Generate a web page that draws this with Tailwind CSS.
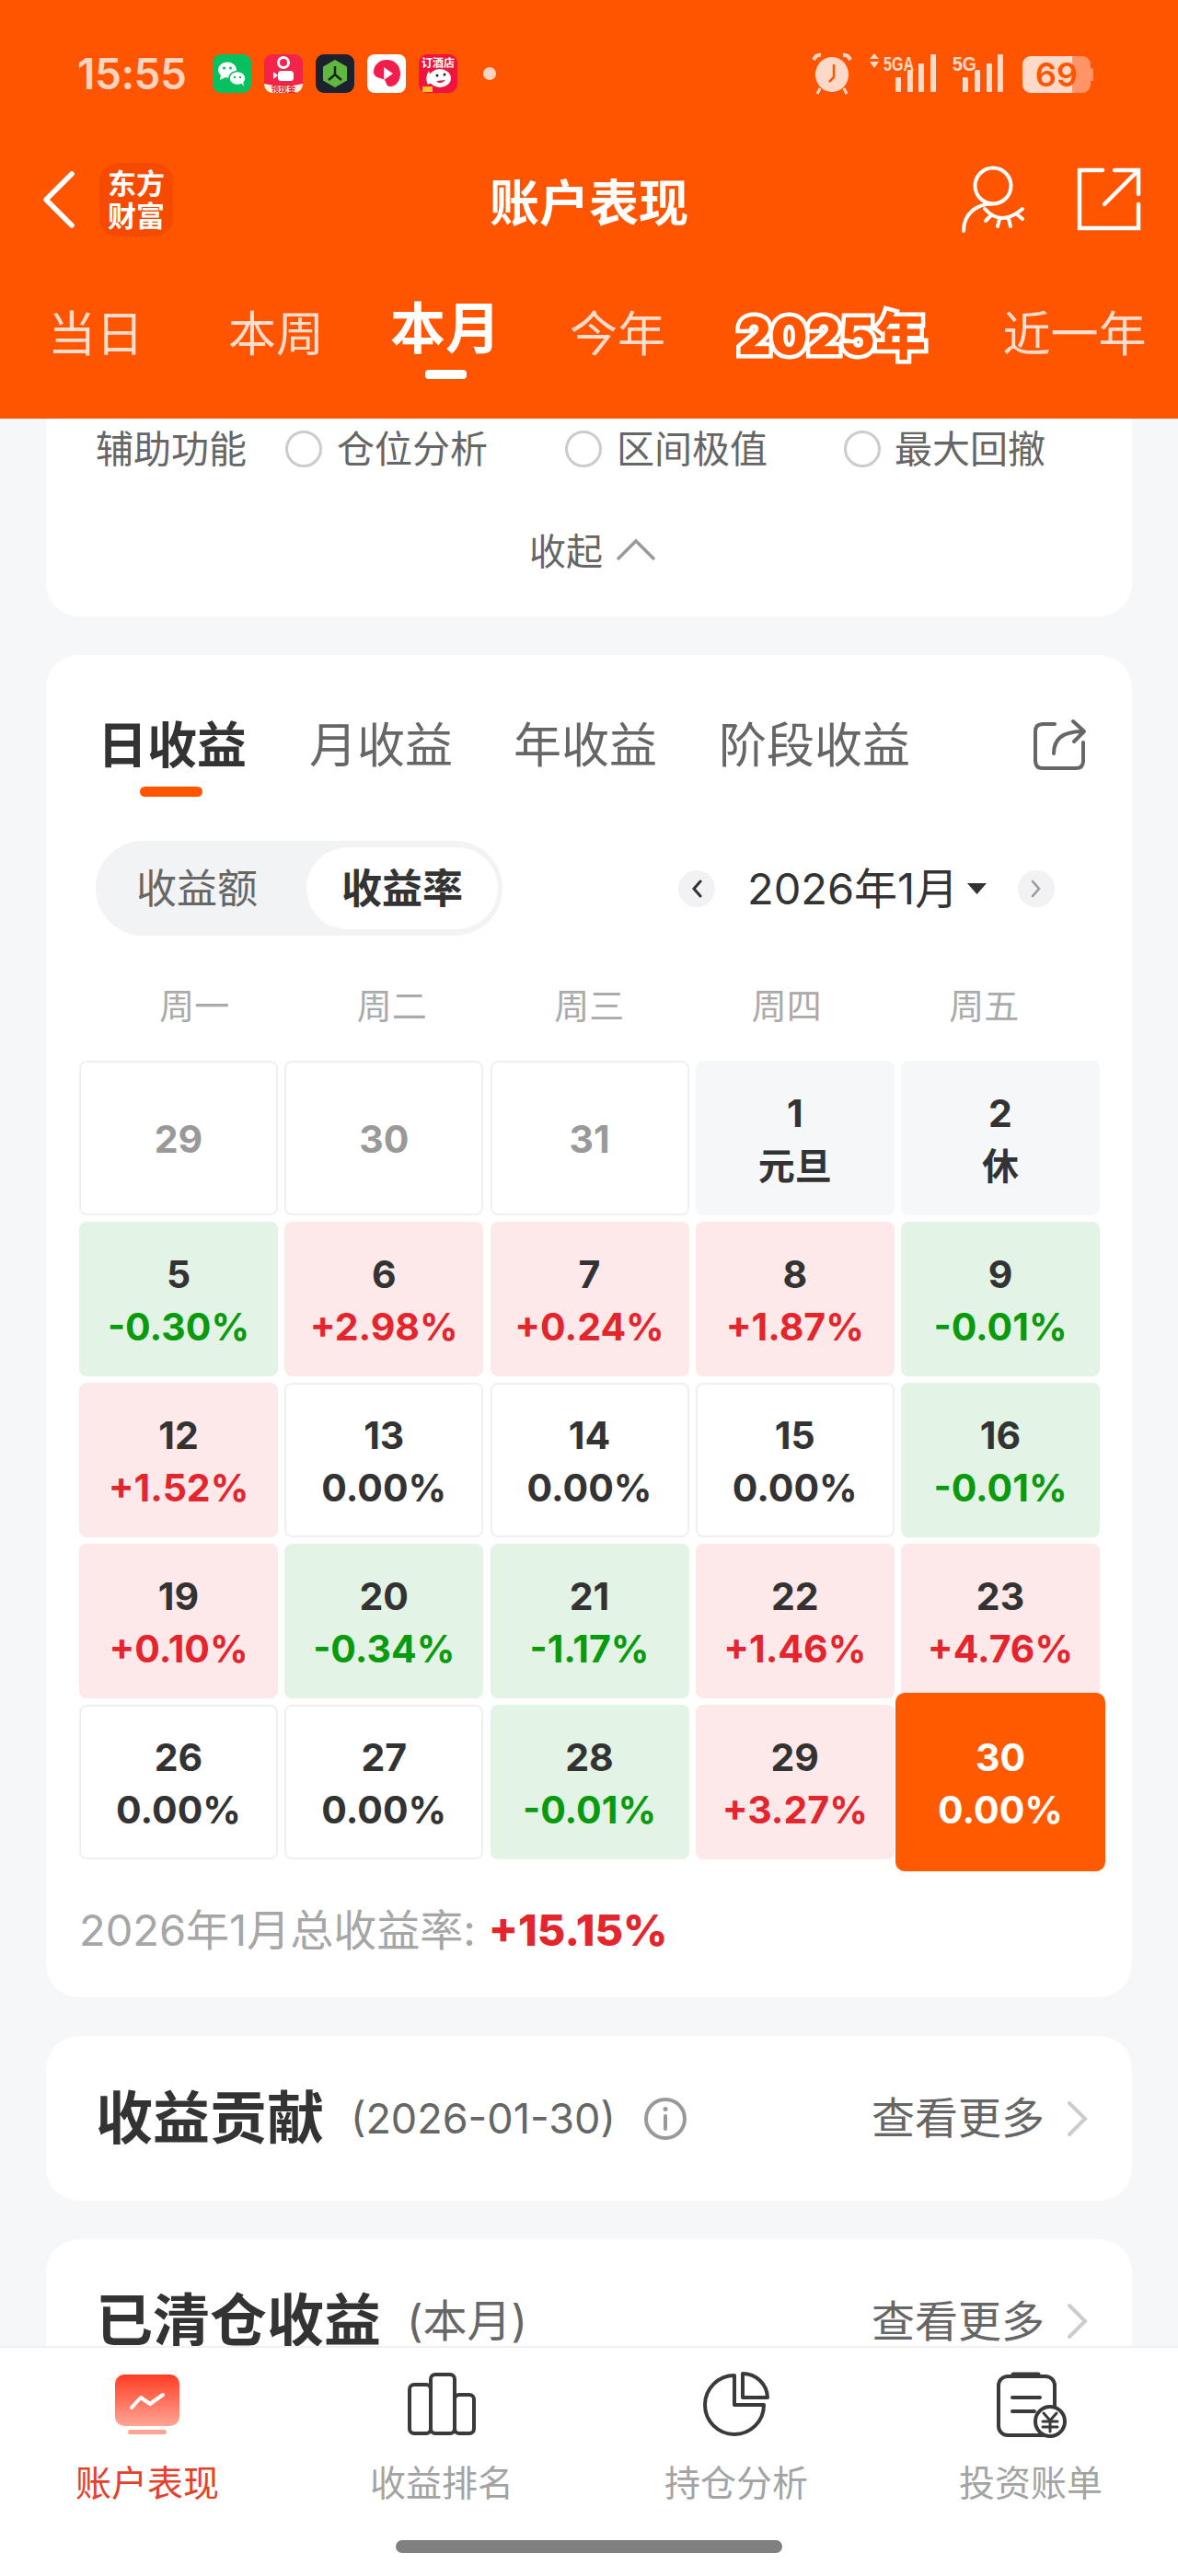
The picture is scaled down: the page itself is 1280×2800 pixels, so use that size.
<!DOCTYPE html>
<html lang="zh-CN">
<head>
<meta charset="utf-8">
<title>账户表现</title>
<script src="https://cdn.jsdelivr.net/npm/@tailwindcss/browser@4"></script>
</head>
<body class="[font-family:Inter,'Noto_Sans_CJK_SC',sans-serif]">
<div class="w-[1280px] h-[2800px] flex flex-col overflow-hidden bg-[#f6f7f9] text-[#333]">

  <header class="h-[455px] shrink-0 bg-[#ff5500] text-white flex flex-col">
    <div class="mt-[59px] h-[42px] flex items-center">
      <span class="ml-[84px] w-[117px] text-[46px] leading-[42px] font-semibold text-[#ffd4bf] tracking-[-0.5px]">15:55</span>
      <div class="ml-[30px] flex gap-[14px] items-center">
        <svg class="w-[42px] h-[42px]" viewBox="0 0 42 42"><rect width="42" height="42" rx="9" fill="#07c160"/><ellipse cx="16" cy="17" rx="10" ry="8.5" fill="#fff"/><path d="M9 22l-1 6 6-3z" fill="#fff"/><ellipse cx="27" cy="26" rx="9" ry="7.5" fill="#fff" stroke="#07c160" stroke-width="1.5"/><path d="M31 31l3 4-1-6z" fill="#fff"/><circle cx="12.5" cy="15" r="1.5" fill="#07c160"/><circle cx="19.500" cy="15" r="1.500" fill="#07c160"/><circle cx="24" cy="25" r="1.200" fill="#07c160"/><circle cx="30" cy="25" r="1.200" fill="#07c160"/></svg>
        <svg class="w-[42px] h-[42px]" viewBox="0 0 42 42"><rect width="42" height="42" rx="9" fill="#f5224a"/><path d="M0 32q21 5 42 0v1a9 9 0 0 1-9 9H9a9 9 0 0 1-9-9z" fill="#fff3d8"/><circle cx="21" cy="9" r="5.500" fill="none" stroke="#fff" stroke-width="3"/><rect x="15" y="18" width="17" height="11" rx="3.500" fill="#fff"/><path d="M10 19l5 4-5 4z" fill="#fff"/><text x="21" y="41" text-anchor="middle" font-size="9" font-weight="700" fill="#e8173f" font-family="Noto Sans CJK SC">领现金</text></svg>
        <svg class="w-[42px] h-[42px]" viewBox="0 0 42 42"><rect width="42" height="42" rx="9" fill="#1c2130"/><path d="M21 6l13 7.500v15L21 36 8 28.500v-15z" fill="#62b83e"/><path d="M21 13v9l-7 6M21 22l7 6" fill="none" stroke="#14261a" stroke-width="2.500"/></svg>
        <svg class="w-[42px] h-[42px]" viewBox="0 0 42 42"><rect width="42" height="42" rx="8" fill="#fff"/><path d="M21 6c9 0 15 6 15 15 0 8-5 14-11 14-3 0-4-2-5-5s-3-3-6-4c-4-1-7-3-7-7 0-7 6-13 14-13z" fill="#f01d4d"/><path d="M18 14l10 7-10 7z" fill="#fff"/></svg>
        <svg class="w-[42px] h-[42px]" viewBox="0 0 42 42"><rect width="42" height="42" rx="9" fill="#f0143c"/><text x="21" y="14" text-anchor="middle" font-size="12" font-weight="700" fill="#fff" font-family="Noto Sans CJK SC">订酒店</text><ellipse cx="23" cy="26" rx="12" ry="10" fill="#fff"/><path d="M11 18q-5 8-1 15l5-3z" fill="#fff"/><path d="M19 29q5 5 10-1z" fill="#d2203e"/><circle cx="20" cy="23" r="1.500" fill="#222"/><circle cx="28" cy="22" r="1.500" fill="#222"/><rect x="4" y="35" width="11" height="6" fill="#ffc02e"/></svg>
      </div>
      <span class="ml-[28px] w-[14px] h-[14px] rounded-full bg-[#ffd4bf]"></span>
      <svg class="ml-[342px] w-[310px] h-[48px]" viewBox="0 0 310 48" fill="#ffd9c7">
        <g fill="none" stroke="#ffd9c7" stroke-width="3">
          <path d="M3 9q3-6 8-5" stroke-width="4"/><path d="M35 4q5-1 8 5" stroke-width="4"/>
        </g>
        <ellipse cx="23" cy="25" rx="18" ry="19"/>
        <path d="M10 40l-3 6M36 40l3 6" stroke="#ffd9c7" stroke-width="3"/>
        <path d="M25 14v14l-5 5" fill="none" stroke="#ff5500" stroke-width="2.500"/>
        <path d="M64 8l5-6 5 6zM64 11h10l-5 7z"/>
        <text x="79" y="21" font-size="22" font-weight="700" textLength="33" lengthAdjust="spacingAndGlyphs" font-family="Liberation Sans">5GA</text>
        <rect x="92" y="28" width="6" height="16" rx="1"/><rect x="105" y="20" width="6" height="24" rx="1"/><rect x="117" y="13" width="6" height="31" rx="1"/><rect x="130" y="3" width="6" height="41" rx="1"/>
        <text x="154" y="21" font-size="22" font-weight="700" textLength="26" lengthAdjust="spacingAndGlyphs" font-family="Liberation Sans">5G</text>
        <rect x="165" y="28" width="6" height="16" rx="1"/><rect x="178" y="20" width="6" height="24" rx="1"/><rect x="191" y="13" width="6" height="31" rx="1"/><rect x="203" y="3" width="6" height="41" rx="1"/>
        <rect x="230" y="5" width="74" height="40" rx="9" fill="#ff9566"/>
        <path d="M239 5h45v40h-45a9 9 0 0 1-9-9V14a9 9 0 0 1 9-9z"/>
        <rect x="304" y="18" width="3" height="14" rx="1.500" fill="#ff9566"/>
        <text x="267" y="38" text-anchor="middle" font-size="36" font-weight="600" fill="#ff5500" font-family="Inter">69</text>
      </svg>
    </div>

    <div class="mt-[76px] h-[80px] relative flex items-center">
      <svg class="ml-[44px] w-[40px] h-[66px]" viewBox="0 0 40 66" fill="none" stroke="#fff" stroke-width="5.500" stroke-linecap="round" stroke-linejoin="round"><path d="M34 5L6 33l28 28"/></svg>
      <div class="ml-[24px] w-[80px] h-[80px] rounded-[20px] bg-[#f54a00] flex flex-col items-center justify-center text-[31px] leading-[35px] font-bold"><span>东方</span><span>财富</span></div>
      <h1 class="absolute left-0 right-0 top-[5px] text-center text-[54px] leading-[80px] font-bold">账户表现</h1>
      <svg class="ml-auto w-[80px] h-[80px]" viewBox="0 0 80 80" fill="none" stroke="#fff" stroke-width="4" stroke-linecap="round"><circle cx="39" cy="25" r="19.500"/><path d="M38 44.500C20 45 7 56 7 74"/><path d="M30 50q18 20 41 0M37 57l-6 6M46 61l-2 8M56 61l2 8M65 56l6 5"/></svg>
      <svg class="ml-[49px] mr-[39px] w-[72px] h-[72px]" viewBox="0 0 72 72" fill="none" stroke="#fff" stroke-width="4.500" stroke-linecap="round"><path d="M29 4H4v63h64V41M42 4h26v26M31 41L68 4"/></svg>
    </div>

    <nav class="mt-[67px] flex items-center h-[80px] text-[52px] leading-[60px] text-[#ffdccb]">
      <span class="ml-[52px]">当日</span>
      <span class="ml-[92px]">本周</span>
      <div class="ml-[72px] self-start flex flex-col items-center text-white">
        <span class="text-[60px] leading-[66px] font-bold">本月</span>
        <span class="block w-[45px] h-[10px] rounded-[4px] bg-white mt-[12px]"></span>
      </div>
      <span class="ml-[75px]">今年</span>
      <span class="ml-[79px] text-[55px] font-black text-[#ff5500] [-webkit-text-stroke:9px_#fff] [paint-order:stroke_fill] mb-[-1px] tracking-[0.5px]">2025年</span>
      <span class="ml-[83px]">近一年</span>
    </nav>
  </header>

  <main class="flex-1 min-h-0 overflow-hidden flex flex-col px-[50px]">
    <section class="shrink-0 h-[215px] rounded-b-[36px] bg-white">
      <div class="pt-[8px] pl-[54px] flex items-center text-[41px] leading-[50px] text-[#666]">
        <span>辅助功能</span>
        <span class="ml-[42px] w-[40px] h-[40px] rounded-full border-[3px] border-[#ccc]"></span>
        <span class="ml-[16px]">仓位分析</span>
        <span class="ml-[84px] w-[40px] h-[40px] rounded-full border-[3px] border-[#ccc]"></span>
        <span class="ml-[16px]">区间极值</span>
        <span class="ml-[83px] w-[40px] h-[40px] rounded-full border-[3px] border-[#ccc]"></span>
        <span class="ml-[15px]">最大回撤</span>
      </div>
      <div class="mt-[62px] pl-[525px] flex items-center text-[40px] leading-[50px] text-[#666]">
        <span>收起</span>
        <svg class="ml-[15px] w-[42px] h-[24px] mb-[6px]" viewBox="0 0 42 24" fill="none" stroke="#999" stroke-width="3.500" stroke-linecap="round"><path d="M2 22L21 3l19 19"/></svg>
      </div>
    </section>

    <section class="shrink-0 mt-[42px] h-[1459px] rounded-[36px] bg-white pl-[36px] pt-[69px]">
      <div class="h-[60px] pl-[20px] flex items-center text-[52px] leading-[60px] text-[#666]">
        <span class="text-[54px] font-bold text-[#333]">日收益</span>
        <span class="ml-[68px]">月收益</span>
        <span class="ml-[66px]">年收益</span>
        <span class="ml-[67px]">阶段收益</span>
        <svg class="ml-[133px] w-[60px] h-[60px]" viewBox="0 0 60 60" fill="none" stroke="#666" stroke-width="4" stroke-linecap="round" stroke-linejoin="round"><path d="M24 6H11Q3 6 3 14v32q0 8 8 8h36q8 0 8-8V26M23 38c0-16 10-24 31-24M44 3l12 11-11 11"/></svg>
      </div>
      <div class="ml-[66px] mt-[14px] w-[68px] h-[11px] rounded-full bg-[#ff5500]"></div>

      <div class="mt-[48px] h-[103px] flex items-center">
        <div class="ml-[18px] w-[442px] h-[103px] rounded-full bg-[#f2f3f5] flex items-center text-[44px]">
          <span class="ml-[44px] text-[#666]">收益额</span>
          <span class="ml-[53px] w-[208px] h-[89px] rounded-full bg-white flex items-center justify-center font-bold text-[#333]">收益率</span>
        </div>
        <span class="ml-[191px] w-[40px] h-[40px] rounded-full bg-[#f2f2f4] flex items-center justify-center">
          <svg class="w-[12px] h-[20px]" viewBox="0 0 12 20" fill="none" stroke="#333" stroke-width="3" stroke-linecap="round"><path d="M10 2L3 10l7 8"/></svg>
        </span>
        <span class="ml-[35px] text-[47px] leading-[60px] text-[#333] whitespace-nowrap">2026年1月</span>
        <svg class="ml-[10px] w-[21px] h-[12px]" viewBox="0 0 21 12" fill="#333"><path d="M0 0h21L10.500 12z"/></svg>
        <span class="ml-[34px] w-[40px] h-[40px] rounded-full bg-[#f2f2f4] flex items-center justify-center">
          <svg class="w-[12px] h-[20px]" viewBox="0 0 12 20" fill="none" stroke="#999" stroke-width="2.500" stroke-linecap="round"><path d="M2 2l7 8-7 8"/></svg>
        </span>
      </div>

      <div class="mt-[51px] ml-[18px] h-[50px] flex text-[38px] leading-[50px] text-[#aaa] text-center">
        <span class="w-[214.500px]">周一</span><span class="w-[214.500px]">周二</span><span class="w-[214.500px]">周三</span><span class="w-[214.500px]">周四</span><span class="w-[214.500px]">周五</span>
      </div>

      <div class="mt-[35px] grid grid-cols-[repeat(5,216px)] auto-rows-[168px] gap-x-[7.25px] gap-y-[7px] text-center text-[41px] leading-[57px] font-bold [&>div]:pt-[3px]">
        <div class="rounded-[8px] border-2 border-[#f0f0f0] bg-white flex items-center justify-center text-[#999]">29</div>
        <div class="rounded-[8px] border-2 border-[#f0f0f0] bg-white flex items-center justify-center text-[#999]">30</div>
        <div class="rounded-[8px] border-2 border-[#f0f0f0] bg-white flex items-center justify-center text-[#999]">31</div>
        <div class="rounded-[8px] bg-[#f6f7f9] flex flex-col justify-center"><span>1</span><span class="text-[40px] font-bold">元旦</span></div>
        <div class="rounded-[8px] bg-[#f6f7f9] flex flex-col justify-center"><span>2</span><span class="text-[40px] font-bold">休</span></div>

        <div class="rounded-[8px] bg-[#e3f3e5] flex flex-col justify-center"><span>5</span><span class="text-[41px] text-[#0a9a0e]">-0.30%</span></div>
        <div class="rounded-[8px] bg-[#fde9e9] flex flex-col justify-center"><span>6</span><span class="text-[41px] text-[#e3262e]">+2.98%</span></div>
        <div class="rounded-[8px] bg-[#fde9e9] flex flex-col justify-center"><span>7</span><span class="text-[41px] text-[#e3262e]">+0.24%</span></div>
        <div class="rounded-[8px] bg-[#fde9e9] flex flex-col justify-center"><span>8</span><span class="text-[41px] text-[#e3262e]">+1.87%</span></div>
        <div class="rounded-[8px] bg-[#e3f3e5] flex flex-col justify-center"><span>9</span><span class="text-[41px] text-[#0a9a0e]">-0.01%</span></div>

        <div class="rounded-[8px] bg-[#fde9e9] flex flex-col justify-center"><span>12</span><span class="text-[41px] text-[#e3262e]">+1.52%</span></div>
        <div class="rounded-[8px] border-2 border-[#f0f0f0] bg-white flex flex-col justify-center"><span>13</span><span class="text-[41px]">0.00%</span></div>
        <div class="rounded-[8px] border-2 border-[#f0f0f0] bg-white flex flex-col justify-center"><span>14</span><span class="text-[41px]">0.00%</span></div>
        <div class="rounded-[8px] border-2 border-[#f0f0f0] bg-white flex flex-col justify-center"><span>15</span><span class="text-[41px]">0.00%</span></div>
        <div class="rounded-[8px] bg-[#e3f3e5] flex flex-col justify-center"><span>16</span><span class="text-[41px] text-[#0a9a0e]">-0.01%</span></div>

        <div class="rounded-[8px] bg-[#fde9e9] flex flex-col justify-center"><span>19</span><span class="text-[41px] text-[#e3262e]">+0.10%</span></div>
        <div class="rounded-[8px] bg-[#e3f3e5] flex flex-col justify-center"><span>20</span><span class="text-[41px] text-[#0a9a0e]">-0.34%</span></div>
        <div class="rounded-[8px] bg-[#e3f3e5] flex flex-col justify-center"><span>21</span><span class="text-[41px] text-[#0a9a0e]">-1.17%</span></div>
        <div class="rounded-[8px] bg-[#fde9e9] flex flex-col justify-center"><span>22</span><span class="text-[41px] text-[#e3262e]">+1.46%</span></div>
        <div class="rounded-[8px] bg-[#fde9e9] flex flex-col justify-center"><span>23</span><span class="text-[41px] text-[#e3262e]">+4.76%</span></div>

        <div class="rounded-[8px] border-2 border-[#f0f0f0] bg-white flex flex-col justify-center"><span>26</span><span class="text-[41px]">0.00%</span></div>
        <div class="rounded-[8px] border-2 border-[#f0f0f0] bg-white flex flex-col justify-center"><span>27</span><span class="text-[41px]">0.00%</span></div>
        <div class="rounded-[8px] bg-[#e3f3e5] flex flex-col justify-center"><span>28</span><span class="text-[41px] text-[#0a9a0e]">-0.01%</span></div>
        <div class="rounded-[8px] bg-[#fde9e9] flex flex-col justify-center"><span>29</span><span class="text-[41px] text-[#e3262e]">+3.27%</span></div>
        <div class="relative flex flex-col justify-center text-white">
          <div class="absolute left-[-6px] right-[-6px] top-[-13px] bottom-[-13px] rounded-[10px] bg-[#ff5a00]"></div>
          <span class="relative">30</span><span class="relative text-[41px]">0.00%</span>
        </div>
      </div>

      <div class="mt-[47px] h-[60px] flex items-center text-[47px] leading-[60px]">
        <span class="text-[#a6a6a6] whitespace-nowrap">2026年1月总收益率:</span>
        <span class="ml-[14px] font-extrabold text-[#e3262e]">+15.15%</span>
      </div>
    </section>

    <section class="shrink-0 mt-[42px] h-[179px] rounded-[36px] bg-white pl-[54px] pr-[47px] flex items-center">
      <h2 class="text-[62px] leading-[80px] font-bold">收益贡献</h2>
      <span class="ml-[29px] text-[45px] text-[#666]">(2026-01-30)</span>
      <svg class="ml-[30px] w-[48px] h-[48px]" viewBox="0 0 48 48" fill="none" stroke="#999" stroke-width="4" stroke-linecap="round"><circle cx="24" cy="24" r="21"/><path d="M24 21v14"/><circle cx="24" cy="13.500" r="1" fill="#999" stroke-width="3"/></svg>
      <span class="ml-auto text-[47px] text-[#666]">查看更多</span>
      <svg class="ml-[24px] w-[24px] h-[40px]" viewBox="0 0 24 40" fill="none" stroke="#ccc" stroke-width="4" stroke-linecap="round"><path d="M3 3l17 17L3 37"/></svg>
    </section>

    <section class="shrink-0 mt-[42px] h-[179px] rounded-[36px] bg-white pl-[54px] pr-[47px] pt-[49px] flex items-start">
      <h2 class="text-[62px] leading-[80px] font-bold">已清仓收益</h2>
      <span class="ml-[28px] text-[48px] leading-[80px] text-[#666]">(本月)</span>
      <span class="ml-auto text-[47px] leading-[80px] text-[#666]">查看更多</span>
      <svg class="ml-[24px] mt-[20px] w-[24px] h-[40px]" viewBox="0 0 24 40" fill="none" stroke="#ccc" stroke-width="4" stroke-linecap="round"><path d="M3 3l17 17L3 37"/></svg>
    </section>
  </main>

  <footer class="shrink-0 h-[250px] bg-white border-t-2 border-[#f0f0f0] flex flex-col items-center">
    <div class="w-full grid grid-cols-4 pt-[26px] text-center text-[39px] leading-[50px] text-[#a3a3a3]">
      <div class="flex flex-col items-center text-[#e5402a]">
        <svg class="w-[90px] h-[72px]" viewBox="0 0 90 72"><defs><linearGradient id="a" x1="0" y1="0" x2="0" y2="1"><stop offset="0" stop-color="#ff3d22"/><stop offset="1" stop-color="#ffa596"/></linearGradient></defs><rect x="10" y="3" width="70" height="56" rx="10" fill="url(#a)"/><rect x="24" y="63" width="42" height="5" rx="2.500" fill="#ffa596"/><path d="M28 39l10-11 10 7 14-10" fill="none" stroke="#fff" stroke-width="4" stroke-linecap="round" stroke-linejoin="round"/></svg>
        <span class="mt-[24px]">账户表现</span>
      </div>
      <div class="flex flex-col items-center">
        <svg class="w-[90px] h-[72px]" viewBox="0 0 90 72" fill="none" stroke="#3a3a3a" stroke-width="4" stroke-linejoin="round"><rect x="10" y="14" width="23" height="53" rx="5"/><rect x="33" y="3" width="26" height="64" rx="5"/><rect x="59" y="25" width="21" height="42" rx="5"/></svg>
        <span class="mt-[24px]">收益排名</span>
      </div>
      <div class="flex flex-col items-center">
        <svg class="w-[90px] h-[72px]" viewBox="0 0 90 72" fill="none" stroke="#3a3a3a" stroke-width="4" stroke-linejoin="round"><path d="M43 4A32 32 0 1 0 75 36H43z"/><path d="M52 2v26h27A27 27 0 0 0 52 2z"/></svg>
        <span class="mt-[24px]">持仓分析</span>
      </div>
      <div class="flex flex-col items-center">
        <svg class="w-[90px] h-[72px]" viewBox="0 0 90 72" fill="none" stroke="#3a3a3a" stroke-width="4" stroke-linecap="round"><rect x="10" y="5" width="61" height="64" rx="10"/><path d="M26 3h27" stroke-width="5"/><path d="M25 28h30M25 43h24"/><circle cx="66" cy="54" r="16" fill="#fff"/><path d="M59 45l7 8 7-8M58 54h16M58 60h16M66 53v12" stroke-width="3"/></svg>
        <span class="mt-[24px]">投资账单</span>
      </div>
    </div>
    <div class="mt-[37px] w-[420px] h-[14px] rounded-full bg-[#808080]"></div>
  </footer>
</div>
</body>
</html>
